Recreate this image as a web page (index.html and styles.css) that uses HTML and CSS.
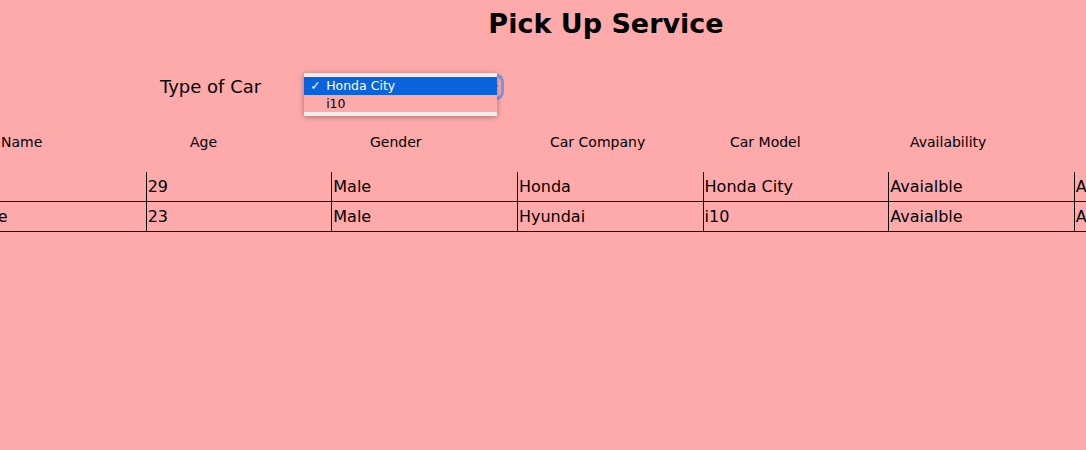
FILE: index.html
```html
<!DOCTYPE html>
<html lang="en">
<head>
    <meta charset="UTF-8">
    <title>Pick Up Service</title>
    <link rel="stylesheet" href="styles.css">
</head>
<body>
    <div class="page">
        <h1>Pick Up Service</h1>
        <div class="filter">
            <label for="carType">Type of Car</label>
            <div class="select-wrap">
                <select id="carType">
                    <option>Honda City</option>
                    <option>i10</option>
                </select>
                <!-- the open popup menu -->
                <ul class="menu">
                    <li class="selected"><span class="check">&#10003;</span>Honda City</li>
                    <li>i10</li>
                </ul>
            </div>
        </div>
        <div class="labels">
            <span>Name</span>
            <span>Age</span>
            <span>Gender</span>
            <span>Car Company</span>
            <span>Car Model</span>
            <span>Availability</span>
        </div>
        <table class="cars">
            <tr>
                <td>Ravi</td>
                <td>29</td>
                <td>Male</td>
                <td>Honda</td>
                <td>Honda City</td>
                <td>Avaialble</td>
                <td>Accept</td>
            </tr>
            <tr>
                <td>Steve</td>
                <td>23</td>
                <td>Male</td>
                <td>Hyundai</td>
                <td>i10</td>
                <td>Avaialble</td>
                <td>Accept</td>
            </tr>
        </table>
    </div>
</body>
</html>
```

FILE: styles.css
```css
body {
    margin: 0;
    background-color: #ffaaaa;
    font-family: "DejaVu Sans", Verdana, sans-serif;
    overflow: hidden;
}
.page {
    width: 1300px;
    margin-left: -40px;
}
h1 {
    margin: 0;
    padding-top: 7px;
    padding-right: 8px;
    text-align: center;
    font-size: 27px;
    line-height: 34px;
}
.filter {
    display: flex;
    align-items: center;
    margin-top: 35px;
    padding-left: 200px;
}
.filter label {
    font-size: 18px;
    margin-right: 46px;
}
.select-wrap {
    position: relative;
}
select {
    width: 194px;
    height: 20px;
    border: none;
    border-radius: 5px;
    background: #ffaaaa;
    box-shadow: 0 0 0 3px rgba(70, 140, 255, 0.7);
    font-size: 12px;
}
.menu {
    position: absolute;
    left: -3px;
    top: -3px;
    width: 193px;
    margin: 0;
    padding: 4px 0;
    list-style: none;
    background: #eeeeee;
    box-shadow: 0 1px 6px rgba(0, 0, 0, 0.35);
    font-size: 12.5px;
}
.menu li {
    height: 17px;
    line-height: 17px;
    padding-left: 22px;
    background: #ffaaaa;
}
.menu li.selected {
    height: 18px;
    line-height: 18px;
    background: #0a63dd;
    color: white;
}
.check {
    display: inline-block;
    width: 16px;
    margin-left: -16px;
    font-weight: bold;
}
.labels {
    display: flex;
    margin-top: 37px;
    padding-left: 41px;
    font-size: 14px;
}
.labels span {
    width: 180px;
}
.labels span:first-child {
    width: 189px;
}
.cars {
    width: 1300px;
    margin-top: 22px;
    border-collapse: collapse;
    table-layout: fixed;
    font-size: 16px;
}
.cars td {
    height: 29px;
    padding: 0 1px;
    border-left: 1px solid black;
    border-bottom: 1px solid black;
    white-space: nowrap;
    overflow: hidden;
}
```
